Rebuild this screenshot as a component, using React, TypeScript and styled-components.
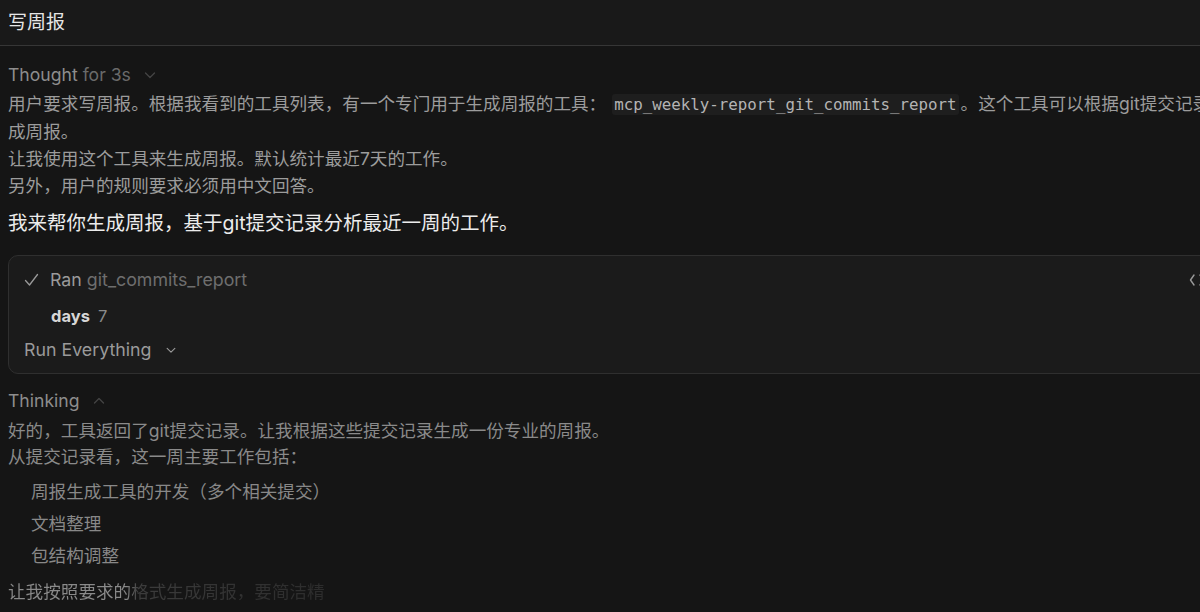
import styled, { createGlobalStyle } from "styled-components";

const GlobalStyle = createGlobalStyle`
  html, body {
    margin: 0;
    padding: 0;
    background: #151515;
    overflow: hidden;
  }
  body {
    font-family: Inter, "Noto Sans CJK SC", "Noto Sans", sans-serif;
    -webkit-font-smoothing: antialiased;
  }
`;

const Page = styled.div`
  width: 1200px;
  height: 612px;
  overflow: hidden;
  background: #151515;
`;

const TopBar = styled.div`
  height: 45px;
  padding: 0 8px;
  display: flex;
  align-items: center;
  background: #191919;
  border-bottom: 1px solid #363636;
`;

const Title = styled.div`
  font-size: 19px;
  color: #e6e6e6;
  line-height: 24px;
`;

const Main = styled.div`
  width: 1230px;
  padding: 0 8px;
  box-sizing: border-box;
  display: flex;
  flex-direction: column;
`;

const Toggle = styled.div<{ $top: number }>`
  display: flex;
  align-items: center;
  gap: 12px;
  margin-top: ${(p) => p.$top}px;
  font-size: 17.6px;
  line-height: 24px;
  color: #8d8d8d;
`;

const Dim = styled.span`
  color: #6a6a6a;
`;

const Paragraph = styled.div<{ $tone: "light" | "dim"; $top: number; $lh: number }>`
  margin-top: ${(p) => p.$top}px;
  font-size: 17.6px;
  line-height: ${(p) => p.$lh}px;
  color: ${(p) => (p.$tone === "light" ? "#9c9c9c" : "#8a8a8a")};
`;

const Line = styled.div`
  white-space: nowrap;
`;

const Code = styled.code`
  font-family: "DejaVu Sans Mono", "Liberation Mono", monospace;
  font-size: 15.8px;
  color: #b4b4b4;
  background: #1e1e1e;
  border-radius: 3px;
  padding: 1px 2px;
  margin: 0 2px 0 6px;
`;

const Answer = styled.div`
  margin-top: 11px;
  font-size: 19.5px;
  line-height: 26px;
  color: #ececec;
  font-weight: 400;
`;

const Card = styled.div`
  margin-top: 19px;
  border: 1px solid #2f2f2f;
  border-radius: 10px;
  background: #1b1b1b;
  padding: 12px 16px 11px 15px;
  display: flex;
  flex-direction: column;
`;

const CardHead = styled.div`
  display: flex;
  align-items: center;
  gap: 11px;
  font-size: 17.8px;
  line-height: 24px;
  color: #9a9a9a;
`;

const Spacer = styled.div`
  flex: 1;
`;

const ToolName = styled.span`
  color: #6e6e6e;
`;

const Args = styled.div`
  margin-top: 12px;
  padding-left: 27px;
  font-size: 16.5px;
  line-height: 24px;
  color: #8a8a8a;
`;

const ArgKey = styled.span`
  font-weight: 700;
  color: #d6d6d6;
  margin-right: 8px;
`;

const RunMode = styled.div`
  margin-top: 10px;
  display: flex;
  align-items: center;
  gap: 14px;
  font-size: 17.8px;
  line-height: 24px;
  color: #9a9a9a;
`;

const List = styled.div`
  margin-top: 6px;
  padding-left: 23px;
  font-size: 17.6px;
  line-height: 32px;
  color: #888888;
`;

const Streaming = styled.div`
  margin-top: 7px;
  font-size: 17.6px;
  line-height: 26px;
`;

const Fade = styled.span`
  background: linear-gradient(90deg, #8a8a8a 0px, #8a8a8a 118px, #3c3c3c 130px, #333333 220px, #2c2c2c 320px);
  -webkit-background-clip: text;
  background-clip: text;
  color: transparent;
`;

const Chevron = ({ up, color, size = 14 }: { up?: boolean; color: string; size?: number }) => (
  <svg width={size} height={size} viewBox="0 0 14 14" fill="none">
    <path
      d={up ? "M2.5 9 L7 4.5 L11.5 9" : "M2.5 5 L7 9.5 L11.5 5"}
      stroke={color}
      strokeWidth="1.3"
      strokeLinecap="round"
      strokeLinejoin="round"
    />
  </svg>
);

const Check = () => (
  <svg width="15" height="14" viewBox="0 0 15 14" fill="none">
    <path d="M1.5 7.5 L5.5 12 L13.5 1.5" stroke="#9a9a9a" strokeWidth="1.3" strokeLinecap="round" strokeLinejoin="round" />
  </svg>
);

const Expand = () => (
  <svg width="16" height="16" viewBox="0 0 16 16" fill="none">
    <path d="M5 3 L1.5 8 L5 13" stroke="#9a9a9a" strokeWidth="1.4" strokeLinecap="round" strokeLinejoin="round" />
    <path d="M11 3 L14.5 8 L11 13" stroke="#9a9a9a" strokeWidth="1.4" strokeLinecap="round" strokeLinejoin="round" />
  </svg>
);

export default function App() {
  return (
    <Page>
      <GlobalStyle />
      <TopBar>
        <Title>写周报</Title>
      </TopBar>
      <Main>
        <Toggle $top={17}>
          <span>
            Thought <Dim>for 3s</Dim>
          </span>
          <Chevron color="#444444" />
        </Toggle>
        <Paragraph $tone="light" $top={3} $lh={27}>
          <Line>
            用户要求写周报。根据我看到的工具列表，有一个专门用于生成周报的工具：
            <Code>mcp_weekly-report_git_commits_report</Code>。这个工具可以根据git提交记录生
          </Line>
          <Line>成周报。</Line>
          <Line>让我使用这个工具来生成周报。默认统计最近7天的工作。</Line>
          <Line>另外，用户的规则要求必须用中文回答。</Line>
        </Paragraph>
        <Answer>我来帮你生成周报，基于git提交记录分析最近一周的工作。</Answer>
        <Card>
          <CardHead>
            <Check />
            <span>
              Ran <ToolName>git_commits_report</ToolName>
            </span>
            <Spacer />
            <Expand />
          </CardHead>
          <Args>
            <ArgKey>days</ArgKey>7
          </Args>
          <RunMode>
            Run Everything
            <Chevron color="#9a9a9a" size={12} />
          </RunMode>
        </Card>
        <Toggle $top={15}>
          <span>Thinking</span>
          <Chevron up color="#444444" />
        </Toggle>
        <Paragraph $tone="dim" $top={5} $lh={26}>
          <Line>好的，工具返回了git提交记录。让我根据这些提交记录生成一份专业的周报。</Line>
          <Line>从提交记录看，这一周主要工作包括：</Line>
        </Paragraph>
        <List>
          <Line>周报生成工具的开发（多个相关提交）</Line>
          <Line>文档整理</Line>
          <Line>包结构调整</Line>
        </List>
        <Streaming>
          <Fade>让我按照要求的格式生成周报，要简洁精</Fade>
        </Streaming>
      </Main>
    </Page>
  );
}
